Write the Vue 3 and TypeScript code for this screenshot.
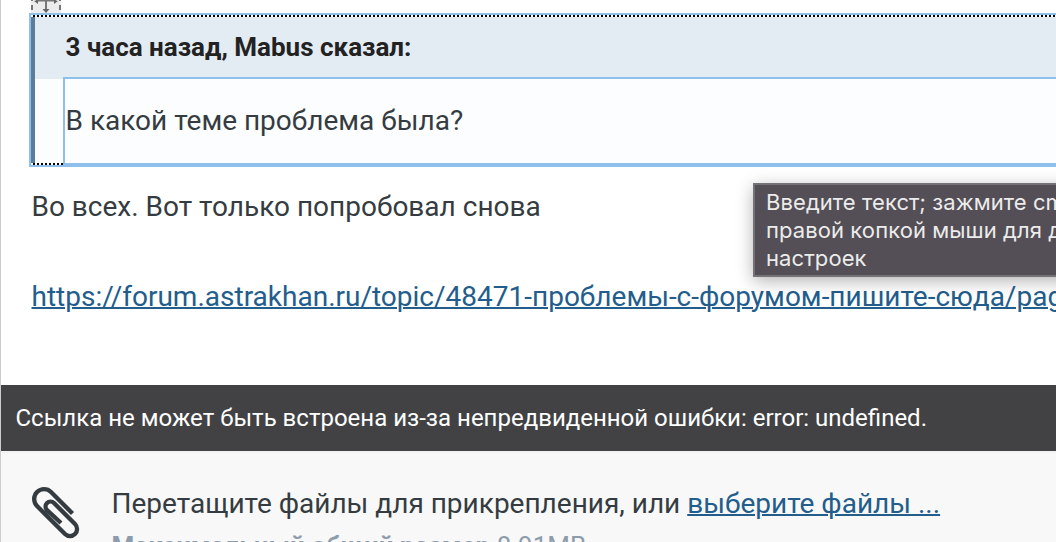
<template>
  <div class="page">
    <div class="editor">
      <svg class="handle" width="30" height="15" viewBox="0 0 30 15">
        <rect width="30" height="15" fill="#ececec" />
        <path d="M1 0v1M1 5v5M29 0v1M29 5v5M0 14h4M8 14h4M18 14h4M26 14h4" stroke="#777" stroke-width="2" />
        <path d="M15 0v12M5 0.500h20" fill="none" stroke="#777" stroke-width="2" />
        <path d="M7 0v4L3 1zM23 0v4l4-3zM11.500 9h7L15 13z" fill="#666" />
      </svg>

      <blockquote class="quote">
        <div class="bar"></div>
        <div class="quote-main">
          <div class="quote-header"><span>{{ quote.header }}</span></div>
          <div class="quote-body"><span>{{ quote.text }}</span></div>
        </div>
      </blockquote>

      <p class="reply"><span>{{ reply }}</span></p>
      <p class="link-row"><a class="link url">{{ url }}</a></p>

      <div class="tooltip">
        <div v-for="(line, index) in tooltip" :key="index">{{ line }}</div>
      </div>
    </div>

    <div class="error"><span>{{ errorText }}</span></div>

    <div class="upload">
      <svg class="clip" width="64" height="62" viewBox="0 0 64 62">
        <path
          d="M48.500 33.500L27 12A9.900 9.900 0 0 0 13 26L41 54A7.070 7.070 0 0 0 51 44L30 23A4.950 4.950 0 0 0 23 30L37 43"
          fill="none"
          stroke="#353c41"
          stroke-width="4.300"
        />
      </svg>
      <div class="upload-text">
        <p class="drop"><span>Перетащите файлы для прикрепления, или <a class="link">выберите файлы ...</a></span></p>
        <p class="limit"><span><b>Максимальный общий размер</b> 8.91MB</span></p>
      </div>
    </div>
  </div>
</template>

<script setup lang="ts">
import { reactive, ref } from 'vue'

interface Quote {
  header: string
  text: string
}

const quote = reactive<Quote>({
  header: '3 часа назад, Mabus сказал:',
  text: 'В какой теме проблема была?',
})
const reply = ref('Во всех. Вот только попробовал снова')
const url = ref('https://forum.astrakhan.ru/topic/48471-проблемы-с-форумом-пишите-сюда/page')
const tooltip = ['Введите текст; зажмите cmd', 'правой копкой мыши для доп.', 'настроек']
const errorText = ref('Ссылка не может быть встроена из-за непредвиденной ошибки: error: undefined.')
</script>

<style>
body {
  margin: 0;
  overflow: hidden;
}
</style>

<style scoped>
.page {
  box-sizing: border-box;
  width: 1056px;
  height: 542px;
  overflow: hidden;
  border-left: 1px solid #cbcbd2;
  background: #fff;
  color: #353c41;
  font-family: Roboto, sans-serif;
  font-size: 28px;
  white-space: nowrap;
}

p {
  margin: 0;
}

.editor {
  position: relative;
  height: 385px;
}

.handle {
  position: absolute;
  left: 30px;
  top: 0;
}

.quote {
  box-sizing: border-box;
  position: relative;
  top: 13px;
  display: flex;
  width: 1100px;
  height: 154px;
  margin: 0 0 0 28px;
  border: 2px solid #8dc0ec;
  background: #fcfdff;
}

/* dotted frame of the widget */
.quote::before,
.quote::after {
  content: '';
  position: absolute;
  left: 0;
  right: 0;
  height: 2px;
  background: repeating-linear-gradient(90deg, #fff 0 2px, #000 2px 4px);
}

.quote::before {
  top: 0;
}

.quote::after {
  bottom: 0;
  right: auto;
  width: 32px;
}

.bar {
  width: 4px;
  background: #5b7d99;
}

.quote-main {
  flex: 1;
}

.quote-header {
  height: 64px;
  padding-left: 30.5px;
  background: #e3ebf3;
  color: #222;
  font-size: 26px;
  font-weight: 700;
  line-height: 64px;
}

.quote-body {
  box-sizing: border-box;
  position: relative;
  top: -2px;
  height: 88px;
  margin-left: 28px;
  padding-left: 0.5px;
  border: 2px solid #8dc0ec;
  background: #fcfdff;
  line-height: 84px;
}

.reply {
  margin: 23px 0 0 30.5px;
  line-height: 60px;
}

.link-row {
  margin: 30px 0 0 30.5px;
  line-height: 60px;
}

.link {
  color: #225d8c;
  text-decoration: underline;
  text-decoration-thickness: 2px;
}

.tooltip {
  box-sizing: border-box;
  position: absolute;
  left: 752px;
  top: 183px;
  width: 340px;
  height: 94px;
  padding: 3px 11px;
  border: 2px solid #747276;
  background: #544f56;
  box-shadow: 0 4px 16px rgba(0, 0, 0, 0.3);
  color: #ececec;
  font-family: Inter, sans-serif;
  font-size: 22px;
  letter-spacing: 0.08px;
  line-height: 28px;
}

.error {
  height: 66px;
  padding-left: 14.5px;
  background: #424244;
  color: #fff;
  font-size: 24px;
  line-height: 66px;
}

.upload {
  display: flex;
  height: 91px;
  box-sizing: border-box;
  border-top: 2px solid #f2f2f2;
  background: #f8f8f8;
}

.clip {
  flex: none;
  margin: 27px 0 0 23px;
}

.upload-text {
  padding: 30px 0 0 23.5px;
}

.drop {
  line-height: 42px;
}

.limit {
  color: #8c9cad;
  font-size: 26px;
  line-height: 42px;
}
</style>
